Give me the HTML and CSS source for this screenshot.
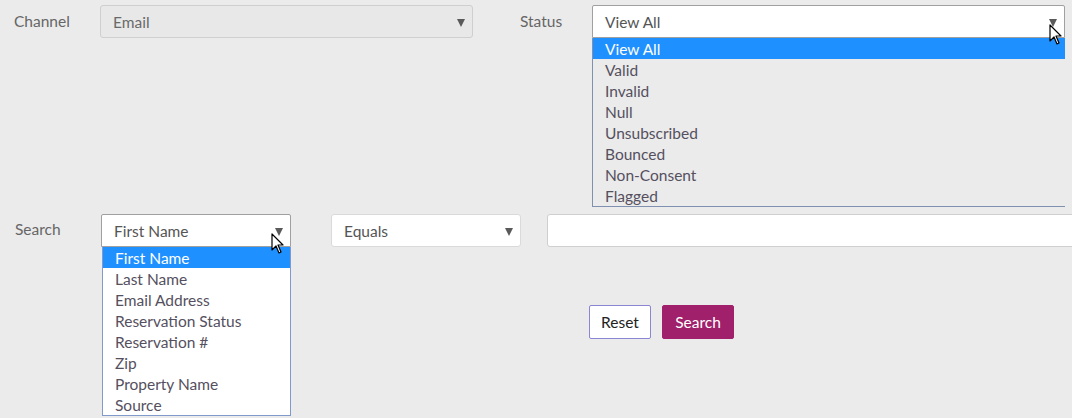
FILE: index.html
```html
<!DOCTYPE html>
<html lang="en">
<head>
  <meta charset="UTF-8">
  <title>Guest Search</title>
  <link rel="stylesheet" href="styles.css">
</head>
<body>
  <form class="filter-form">
    <div class="form-row top-row">
      <label class="field-label">Channel</label>
      <div class="select-box channel disabled">
        <span>Email</span>
        <i class="caret"></i>
      </div>
      <label class="field-label status-label">Status</label>
      <div class="select-wrap status">
        <div class="select-box open">
          <span>View All</span>
          <i class="caret"></i>
        </div>
        <ul class="option-list clear">
          <li class="selected">View All</li>
          <li>Valid</li>
          <li>Invalid</li>
          <li>Null</li>
          <li>Unsubscribed</li>
          <li>Bounced</li>
          <li>Non-Consent</li>
          <li>Flagged</li>
        </ul>
        <svg class="pointer" width="14" height="22" viewBox="0 0 14 22"><path d="M1 1 L1 17 L5 13 L8 20 L10 19 L7 12 L12 12 Z" fill="#fff" stroke="#000" stroke-width="1.2" stroke-linejoin="round"/></svg>
      </div>
    </div>

    <div class="form-row search-row">
      <label class="field-label">Search</label>
      <div class="select-wrap field">
        <div class="select-box open">
          <span>First Name</span>
          <i class="caret"></i>
        </div>
        <ul class="option-list">
          <li class="selected">First Name</li>
          <li>Last Name</li>
          <li>Email Address</li>
          <li>Reservation Status</li>
          <li>Reservation #</li>
          <li>Zip</li>
          <li>Property Name</li>
          <li>Source</li>
        </ul>
        <svg class="pointer" width="14" height="22" viewBox="0 0 14 22"><path d="M1 1 L1 17 L5 13 L8 20 L10 19 L7 12 L12 12 Z" fill="#fff" stroke="#000" stroke-width="1.2" stroke-linejoin="round"/></svg>
      </div>
      <div class="select-box operator">
        <span>Equals</span>
        <i class="caret"></i>
      </div>
      <input type="text" class="text-input">
    </div>

    <div class="form-row button-row">
      <button type="reset" class="btn btn-reset">Reset</button>
      <button type="submit" class="btn btn-search">Search</button>
    </div>
  </form>
</body>
</html>
```

FILE: styles.css
```css
html {
  overflow: hidden;
}
body {
  margin: 0;
  padding: 0;
  min-height: 418px;
  background-color: #ebebeb;
  font-family: Lato, "Open Sans", sans-serif;
  font-size: 15.5px;
  color: #555;
}
.filter-form {
  padding-top: 5px;
}
.form-row {
  display: flex;
  align-items: flex-start;
}
.form-row > * {
  flex-shrink: 0;
}
.field-label {
  width: 86px;
  padding-left: 14px;
  line-height: 33px;
  color: #666;
}
.status-label {
  width: 72px;
  padding-left: 47px;
}
.select-box {
  position: relative;
  box-sizing: border-box;
  height: 33px;
  padding: 1px 12px 0;
  line-height: 31px;
  background-color: #fff;
  border: 1px solid #d4d4d4;
  border-radius: 3px;
  color: #555;
}
.select-box.disabled {
  background-color: #e8e8e8;
  border-color: #cfcfcf;
  color: #6a6a6a;
}
.select-box.open {
  border-color: #a0a0a0;
  border-radius: 2px 2px 0 0;
}
.caret {
  position: absolute;
  right: 7px;
  top: 13px;
  width: 0;
  height: 0;
  border-left: 4px solid transparent;
  border-right: 4px solid transparent;
  border-top: 8px solid #5a5a5a;
}
.channel {
  width: 373px;
}
.select-wrap {
  position: relative;
}
.status {
  width: 473px;
}
.option-list {
  position: absolute;
  top: 33px;
  left: 0;
  right: 0;
  margin: 0;
  padding: 0;
  list-style: none;
  background-color: #fff;
  border: 1px solid #7f9acb;
  border-top: none;
  z-index: 2;
}
.option-list.clear {
  background-color: transparent;
  border-color: #8090b0;
  border-right: none;
}
.option-list li {
  height: 21px;
  line-height: 22px;
  padding-left: 12px;
  color: #555060;
}
.option-list li.selected {
  background-color: #1e90ff;
  color: #fff;
}
.pointer {
  position: absolute;
  right: 2px;
  top: 19px;
  z-index: 3;
}
.search-row {
  margin-top: 176px;
}
.search-row .field-label {
  padding-left: 15px;
  line-height: 31px;
}
.field {
  width: 190px;
}
.field .option-list {
  left: 1px;
}
.field .pointer {
  right: 6px;
}
.operator {
  width: 190px;
  margin-left: 40px;
  border-color: #dadada;
}
.text-input {
  box-sizing: border-box;
  width: 540px;
  height: 33px;
  margin: 0 0 0 26px;
  border: 1px solid #cfcfcf;
  border-radius: 3px;
  background-color: #fff;
}
.button-row {
  margin-top: 58px;
  padding-left: 589px;
  gap: 11px;
}
.btn {
  height: 34px;
  padding: 0;
  font-family: Lato, "Open Sans", sans-serif;
  font-size: 15.5px;
  border-radius: 2px;
  cursor: pointer;
}
.btn-reset {
  width: 62px;
  background-color: #fff;
  border: 1px solid #8a86d4;
  color: #222;
}
.btn-search {
  width: 72px;
  background-color: #a0206c;
  border: 1px solid #a0206c;
  color: #fff;
}
```
